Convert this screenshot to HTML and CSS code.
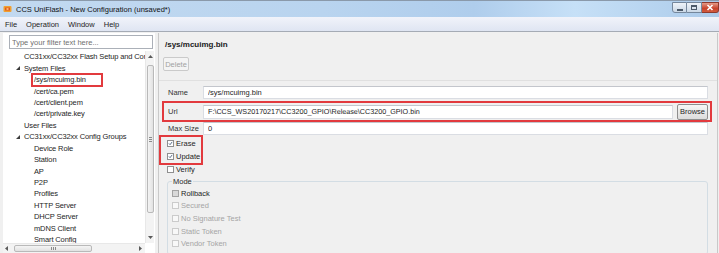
FILE: index.html
```html
<!DOCTYPE html>
<html lang="en">
<head>
<meta charset="UTF-8">
<title>CCS UniFlash - New Configuration (unsaved*)</title>
<link rel="stylesheet" href="styles.css">
</head>
<body>
<div class="window">
    <header class="titlebar">
        <svg class="app-icon" viewBox="0 0 9 8">
            <rect x="0.5" y="1" width="8" height="6" rx="1" fill="#f0a030"/>
            <rect x="2" y="2.5" width="5" height="3" fill="#e2571e"/>
            <rect x="3.5" y="3.3" width="2" height="1.4" fill="#ffe08a"/>
        </svg>
        <span class="title">CCS UniFlash - New Configuration (unsaved*)</span>
        <div class="controls">
            <span class="ctl min"><i></i></span>
            <span class="ctl max"><i></i></span>
            <span class="ctl close">
                <svg viewBox="0 0 8 7"><path d="M1.5 1 L6.5 6 M6.5 1 L1.5 6" stroke="#fff" stroke-width="1.6"/></svg>
            </span>
        </div>
    </header>

    <nav class="menubar">
        <span>File</span>
        <span>Operation</span>
        <span>Window</span>
        <span>Help</span>
    </nav>

    <div class="main">
        <aside class="explorer">
            <input class="filter" type="text" placeholder="Type your filter text here...">
            <div class="tree-box">
                <ul class="tree">
                    <li class="lvl1">CC31xx/CC32xx Flash Setup and Cor</li>
                    <li class="lvl1"><svg class="twisty" viewBox="0 0 5 5"><path d="M5 0 L5 5 L0 5 Z"/></svg>System Files</li>
                    <li class="lvl2"><span class="picked">/sys/mcuimg.bin</span></li>
                    <li class="lvl2">/cert/ca.pem</li>
                    <li class="lvl2">/cert/client.pem</li>
                    <li class="lvl2">/cert/private.key</li>
                    <li class="lvl1">User Files</li>
                    <li class="lvl1"><svg class="twisty" viewBox="0 0 5 5"><path d="M5 0 L5 5 L0 5 Z"/></svg>CC31xx/CC32xx Config Groups</li>
                    <li class="lvl2">Device Role</li>
                    <li class="lvl2">Station</li>
                    <li class="lvl2">AP</li>
                    <li class="lvl2">P2P</li>
                    <li class="lvl2">Profiles</li>
                    <li class="lvl2">HTTP Server</li>
                    <li class="lvl2">DHCP Server</li>
                    <li class="lvl2">mDNS Client</li>
                    <li class="lvl2">Smart Config</li>
                </ul>
                <div class="vscroll">
                    <svg class="arrow" viewBox="0 0 5 3"><path d="M0 3 L2.5 0 L5 3 Z"/></svg>
                    <div class="vthumb"><i></i><i></i><i></i></div>
                    <svg class="arrow down" viewBox="0 0 5 3"><path d="M0 0 L2.5 3 L5 0 Z"/></svg>
                </div>
            </div>
            <div class="hscroll">
                <svg class="arrow" viewBox="0 0 3 5"><path d="M3 0 L0 2.5 L3 5 Z"/></svg>
                <div class="hthumb"><i></i><i></i><i></i></div>
                <svg class="arrow right" viewBox="0 0 3 5"><path d="M0 0 L3 2.5 L0 5 Z"/></svg>
            </div>
        </aside>

        <section class="editor">
            <h1 class="heading">/sys/mcuimg.bin</h1>
            <button class="btn delete" disabled>Delete</button>

            <div class="details">
                <div class="field">
                    <label>Name</label>
                    <input type="text" value="/sys/mcuimg.bin" readonly>
                </div>
                <div class="field marked">
                    <label>Url</label>
                    <input class="url" type="text" value="F:\CCS_WS20170217\CC3200_GPIO\Release\CC3200_GPIO.bin" readonly>
                    <button class="btn browse">Browse</button>
                </div>
                <div class="field">
                    <label>Max Size</label>
                    <input type="text" value="0" readonly>
                </div>

                <div class="checks marked">
                    <div class="check"><span class="box"><svg viewBox="0 0 7 7"><path d="M1.3 3.4 L2.9 5.1 L5.8 1.3"/></svg></span>Erase</div>
                    <div class="check"><span class="box"><svg viewBox="0 0 7 7"><path d="M1.3 3.4 L2.9 5.1 L5.8 1.3"/></svg></span>Update</div>
                </div>
                <div class="check verify"><span class="box"></span>Verify</div>

                <fieldset class="mode">
                    <legend>Mode</legend>
                    <div class="check"><span class="box grey"></span>Rollback</div>
                    <div class="check off"><span class="box"></span>Secured</div>
                    <div class="check off"><span class="box"></span>No Signature Test</div>
                    <div class="check off"><span class="box"></span>Static Token</div>
                    <div class="check off"><span class="box"></span>Vendor Token</div>
                </fieldset>
            </div>
        </section>
    </div>
</div>
</body>
</html>
```

FILE: styles.css
```css
* {
    margin: 0;
    padding: 0;
    box-sizing: border-box;
}
body {
    width: 719px;
    height: 253px;
    overflow: hidden;
    background: #f0f0f0;
    font-family: 'Liberation Sans', Arial, sans-serif;
    font-size: 7.5px;
    color: #1e1e1e;
}
.window {
    height: 253px;
    display: flex;
    flex-direction: column;
}

/* title bar */
.titlebar {
    height: 17px;
    display: flex;
    align-items: center;
    padding-left: 3px;
    border-top: 1px solid #8a99aa;
    background: linear-gradient(90deg, #c2d9f0 0%, #b9d4ef 45%, #afcdec 66%, #c6e0f7 80%, #b6d3ef 92%, #abc9e9 100%);
}
.app-icon {
    width: 9px;
    height: 8px;
    margin-right: 4px;
}
.title {
    flex: 1;
    color: #101010;
}
.controls {
    align-self: flex-start;
    display: flex;
    margin-top: 1px;
}
.ctl {
    width: 15px;
    height: 11px;
    display: flex;
    align-items: center;
    justify-content: center;
    border: 1px solid #75879c;
    border-left: none;
    background: linear-gradient(#eef3f9, #cbd8e6);
}
.ctl.min {
    border-left: 1px solid #75879c;
    border-radius: 0 0 0 3px;
}
.ctl.min i {
    width: 6px;
    height: 2px;
    margin-top: 4px;
    background: #4c5a6a;
}
.ctl.max i {
    width: 6px;
    height: 5px;
    border: 1px solid #4c5a6a;
    border-top-width: 2px;
}
.ctl.close {
    width: 17px;
    border-color: #8e3a2e;
    border-radius: 0 0 3px 0;
    background: linear-gradient(#e59a88, #c8432c 60%, #d25a3e);
}
.ctl.close svg {
    width: 8px;
    height: 7px;
}

/* menu */
.menubar {
    height: 15px;
    display: flex;
    align-items: center;
    gap: 9px;
    padding-left: 5px;
    background: linear-gradient(#f1f3fa, #dfe5f2);
    border-bottom: 1px solid #a5abb5;
}

.main {
    flex: 1;
    display: flex;
    gap: 3px;
    padding: 1px 1px 0 3px;
    min-height: 0;
}

/* left side */
.explorer {
    width: 152px;
    display: flex;
    flex-direction: column;
    background: #fff;
}
.filter {
    height: 14px;
    margin: 2px 2px 0 6px;
    padding-left: 2px;
    border: 1px solid #abb0b8;
    font: inherit;
    color: #222;
    outline: none;
}
.filter::placeholder {
    color: #707070;
}
.tree-box {
    height: 192px;
    margin-top: 2px;
    display: flex;
}
.tree {
    flex: 1;
    list-style: none;
    overflow: hidden;
    min-width: 0;
    letter-spacing: -0.13px;
}
.tree li {
    height: 11.44px;
    display: flex;
    align-items: center;
    white-space: nowrap;
}
.tree .lvl1 {
    padding-left: 21px;
}
.tree .lvl2 {
    padding-left: 31px;
}
.twisty {
    width: 4px;
    height: 4px;
    margin: 0 4px 0 -8px;
    fill: #3c3c3c;
}
.picked {
    line-height: 10px;
    border: 2px solid #e23a3e;
    margin-left: -3px;
    padding: 0 15px 0 1px;
}

.vscroll {
    width: 9px;
    margin-right: 1px;
    display: flex;
    flex-direction: column;
    align-items: center;
    background: #f3f3f3;
    border-left: 1px solid #e8e8e8;
    padding: 4px 0 4px;
}
.arrow {
    width: 5px;
    height: 3px;
    fill: #5a5a5a;
}
.arrow.down {
    margin-top: auto;
}
.vthumb {
    width: 7px;
    height: 148px;
    margin-top: 7px;
    border: 1px solid #b9b9b9;
    border-radius: 2px;
    background: linear-gradient(90deg, #f4f4f4, #e2e2e2);
    display: flex;
    flex-direction: column;
    justify-content: center;
    align-items: center;
    gap: 1px;
}
.vthumb i {
    width: 3px;
    height: 1px;
    background: #8a8a8a;
}
.hscroll {
    height: 10px;
    width: 142px;
    display: flex;
    align-items: center;
    padding: 0 3px 0 2px;
    background: #f3f3f3;
    border-top: 1px solid #e8e8e8;
}
.hscroll .arrow {
    width: 3px;
    height: 5px;
}
.hscroll .arrow.right {
    margin-left: auto;
}
.hthumb {
    width: 78px;
    height: 7px;
    margin-left: 6px;
    border: 1px solid #b9b9b9;
    border-radius: 2px;
    background: linear-gradient(#f4f4f4, #e2e2e2);
    display: flex;
    justify-content: center;
    align-items: center;
    gap: 1px;
}
.hthumb i {
    width: 1px;
    height: 3px;
    background: #8a8a8a;
}

/* right side */
.editor {
    flex: 1;
    border-left: 1px solid #c9c9c9;
    border-right: 1px solid #c9c9c9;
    padding-top: 6px;
    overflow: hidden;
}
.heading {
    font-size: 8px;
    line-height: 12px;
    font-weight: bold;
    color: #202020;
    padding-left: 6px;
}
.btn {
    font: inherit;
    padding: 0;
    border: 1px solid #8e8e8e;
    border-radius: 2px;
    background: linear-gradient(#f6f6f6, #dcdcdc);
    color: #1e1e1e;
}
.delete {
    display: block;
    width: 26px;
    height: 14px;
    margin: 6px 0 0 4px;
    border-color: #cacaca;
    background: #f4f4f4;
    color: #a2a2a2;
}
.details {
    margin-top: 9px;
    border-top: 1px solid #e0e0e0;
    padding: 5px 5px 0 0;
}
.field {
    display: flex;
    align-items: center;
    margin-left: 3px;
    padding: 0 4px 0 6px;
}
.field:first-child {
    margin-bottom: 2px;
}
.field label {
    width: 35px;
    color: #333;
}
.field input {
    flex: 1;
    height: 13px;
    padding-left: 4px;
    border: 1px solid #dadde3;
    border-top-color: #c3c6cc;
    background: #fff;
    font: inherit;
    line-height: 11px;
    color: #1e1e1e;
    outline: none;
}
.marked {
    border: 2px solid #e23a3e;
}
.field.marked {
    height: 21px;
    padding: 0 2px 0 4px;
}
.field .url {
    height: 14px;
    font-size: 7.2px;
    line-height: 12px;
    text-rendering: geometricPrecision;
}
.browse {
    width: 31px;
    height: 16px;
    margin-left: 4px;
}

.checks {
    width: 44px;
    padding-left: 6px;
}
.check {
    height: 13px;
    display: flex;
    align-items: center;
    gap: 2px;
    white-space: nowrap;
}
.box {
    width: 7px;
    height: 7px;
    border: 1px solid #8f8f8f;
    background: #fff;
    display: flex;
}
.box svg {
    width: 100%;
    height: 100%;
    fill: none;
    stroke: #2f4a6c;
    stroke-width: 1.1;
}
.verify {
    margin: -2px 0 0 8px;
    height: 12px;
}

.mode {
    margin: 1px 4px 0 8px;
    padding: 0 0 4px 4px;
    border: 1px solid #d3dde4;
    border-radius: 3px;
}
.mode legend {
    padding: 0 1px;
    line-height: 11px;
    color: #2a2a2a;
}
.mode .check {
    height: 12.6px;
}
.box.grey {
    background: #d9d9d9;
    border-color: #a3a3a3;
}
.check.off {
    color: #a5a5a5;
}
.check.off .box {
    border-color: #cbcbcb;
    background: #f8f8f8;
}
```
